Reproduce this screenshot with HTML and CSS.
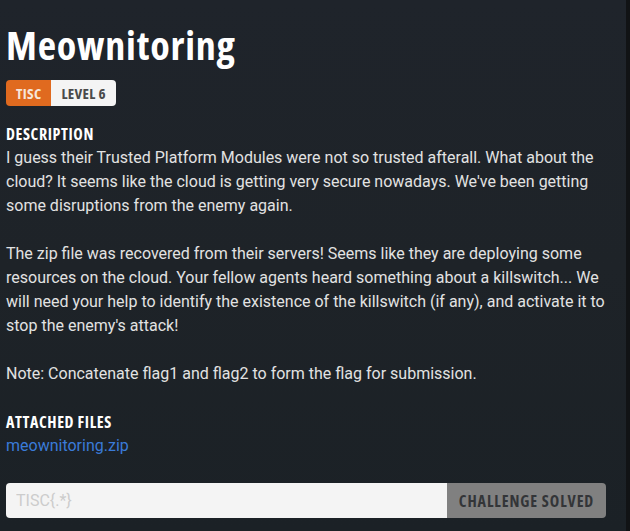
FILE: index.html
```html
<!DOCTYPE html>
<html>
<head>
<meta charset="utf-8">
<link rel="stylesheet" href="styles.css">
</head>
<body>
<div class="page">
  <main class="content">
    <div class="watermark" aria-hidden="true">100</div>
    <h1 class="title">Meownitoring</h1>
    <div class="badges">
      <span class="badge badge-cat">TISC</span>
      <span class="badge badge-level">LEVEL 6</span>
    </div>
    <h2 class="label">DESCRIPTION</h2>
    <div class="desc">
      <p>I guess their Trusted Platform Modules were not so trusted afterall. What about the cloud? It seems like the cloud is getting very secure nowadays. We've been getting some disruptions from the enemy again.</p>
      <p>The zip file was recovered from their servers! Seems like they are deploying some resources on the cloud. Your fellow agents heard something about a killswitch... We will need your help to identify the existence of the killswitch (if any), and activate it to stop the enemy's attack!</p>
      <p>Note: Concatenate flag1 and flag2 to form the flag for submission.</p>
    </div>
    <h2 class="label">ATTACHED FILES</h2>
    <a class="file" href="#">meownitoring.zip</a>
    <form class="submit">
      <input class="flag" type="text" placeholder="TISC{.*}">
      <button class="solved" type="button">CHALLENGE SOLVED</button>
    </form>
  </main>
  <div class="scrollbar"></div>
</div>
</body>
</html>
```
FILE: styles.css
```css
html, body {
  margin: 0;
  padding: 0;
  height: 100%;
}
body {
  background: linear-gradient(180deg, #1f242b 0%, #1e2328 50%, #1b2126 100%);
  font-family: Roboto, "Noto Sans", sans-serif;
  color: #e2e2e2;
  overflow: hidden;
}
.page {
  display: flex;
  height: 100%;
}
.content {
  position: relative;
  flex: 1;
  padding: 22px 20px 0 6px;
}
.scrollbar {
  width: 4px;
  background: #111315;
}
.watermark {
  position: absolute;
  left: 198px;
  top: 380px;
  font-family: "Open Sans", sans-serif;
  font-stretch: 75%;
  font-weight: 700;
  font-size: 40px;
  color: rgba(255,255,255,0.025);
  pointer-events: none;
}
.title {
  margin: 0;
  font-family: "Open Sans", sans-serif;
  font-stretch: 75%;
  font-weight: 700;
  font-size: 40px;
  letter-spacing: 0.8px;
  line-height: 46px;
  color: #ffffff;
}
.badges {
  display: flex;
  margin-top: 12px;
}
.badge {
  font-family: "Open Sans", sans-serif;
  font-stretch: 75%;
  font-weight: 700;
  font-size: 15px;
  letter-spacing: 0.3px;
  line-height: 26px;
  height: 26px;
  padding: 0 10px;
}
.badge-cat {
  background: #e06a1f;
  color: #f6e6da;
  border-radius: 4px 0 0 4px;
}
.badge-level {
  background: #f4f4f4;
  color: #4a4a4a;
  border-radius: 0 4px 4px 0;
}
.label {
  margin: 16px 0 0;
  font-family: "Open Sans", sans-serif;
  font-stretch: 75%;
  font-weight: 700;
  font-size: 16px;
  letter-spacing: 0.6px;
  line-height: 24px;
  color: #ffffff;
}
.desc p {
  margin: 0 0 24px;
  font-size: 16px;
  line-height: 24px;
}
.desc + .label {
  margin-top: 0;
}
.file {
  display: block;
  font-size: 16px;
  line-height: 24px;
  color: #3a7bd8;
  text-decoration: none;
}
.submit {
  display: flex;
  margin-top: 25px;
  width: 600px;
}
.flag {
  flex: 1;
  height: 35px;
  box-sizing: border-box;
  border: none;
  border-radius: 4px 0 0 4px;
  background: #f4f4f4;
  padding: 0 10px;
  font-family: Roboto, sans-serif;
  font-size: 16px;
  outline: none;
}
.flag::placeholder {
  color: #cccccc;
}
.solved {
  width: 159px;
  height: 35px;
  border: none;
  border-radius: 0 4px 4px 0;
  background: #808080;
  color: #333538;
  font-family: "Open Sans", sans-serif;
  font-stretch: 75%;
  font-weight: 700;
  font-size: 16px;
  letter-spacing: 0.9px;
  padding: 0;
}
```
